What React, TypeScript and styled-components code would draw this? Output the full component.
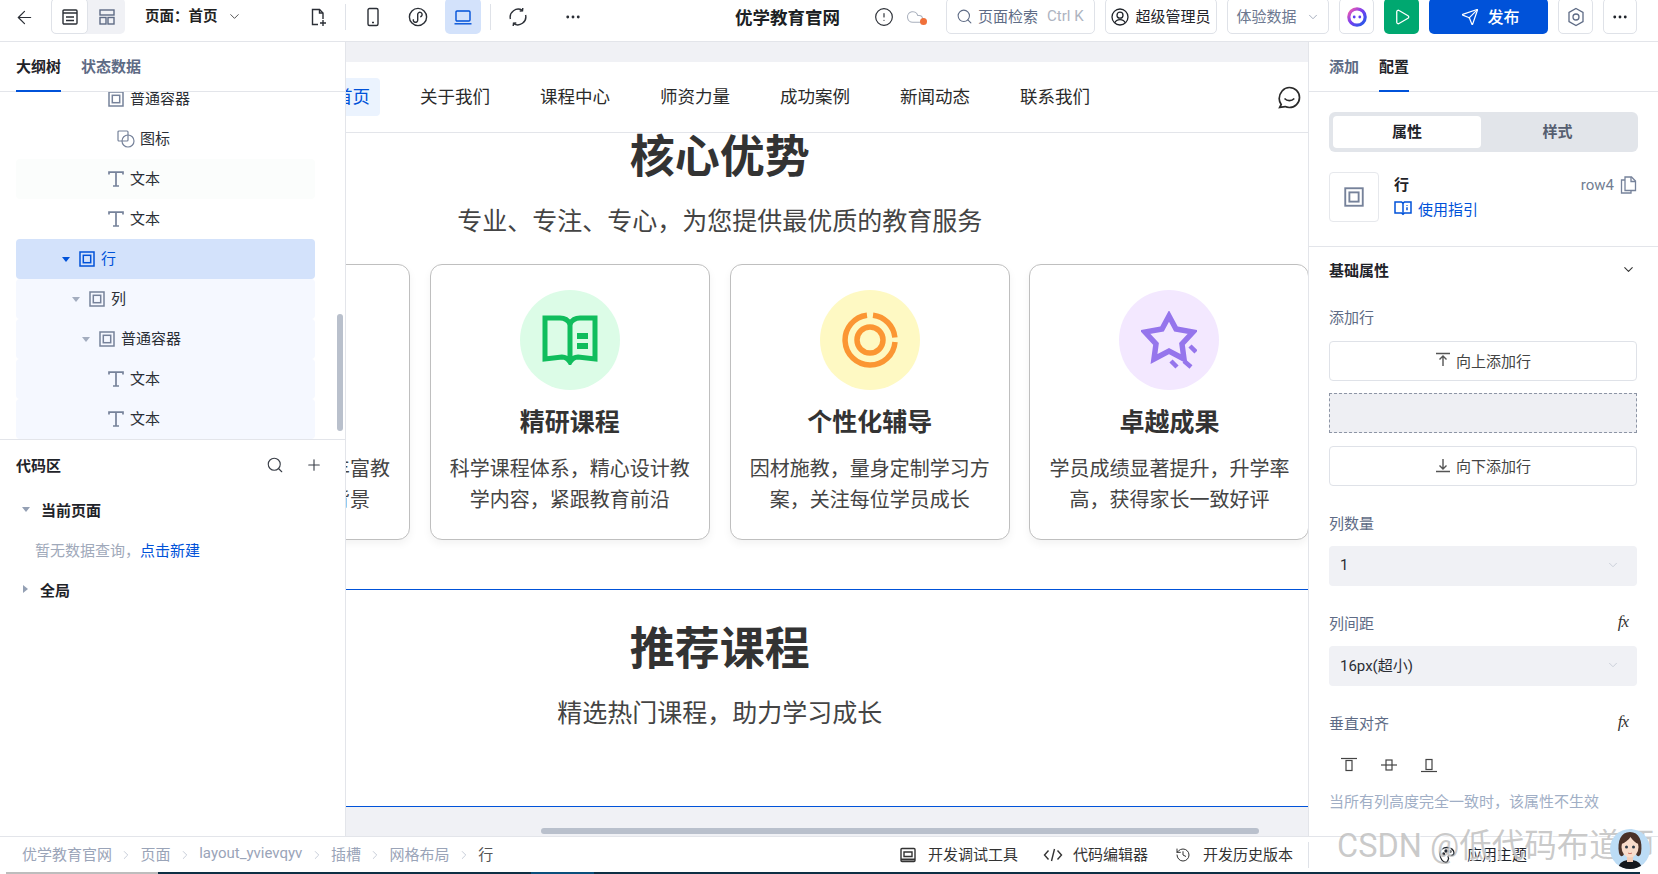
import React from 'react'
import styled, {createGlobalStyle} from 'styled-components'
import {
  ArrowLeft,
  ChevronDown,
  ChevronRight,
  CircleAlert,
  Cloud,
  Ellipsis,
  History,
  Play,
  Plus,
  Search,
  Send,
} from 'lucide-react'

const GlobalStyle = createGlobalStyle`
  html, body {
    margin: 0;
    height: 100%;
    overflow: hidden;
    background: #fff;
  }
  body, button {
    font-family: Roboto, "Noto Sans CJK SC", sans-serif;
    color: #1f2329;
  }
  * {
    box-sizing: border-box;
  }
`

const Root = styled.div`
  position: relative;
  width: 1658px;
  height: 874px;
  display: flex;
  flex-direction: column;
  overflow: hidden;
`

/* top bar */

const TopBar = styled.header`
  flex: none;
  height: 42px;
  display: flex;
  align-items: flex-start;
  padding-left: 16px;
  background: #fff;
  border-bottom: 1px solid #e3e5ea;
`

const BackButton = styled.div`
  width: 16px;
  height: 34px;
  display: flex;
  align-items: center;
  justify-content: center;
  color: #2b2f36;
  svg {
    flex: none;
  }
`

const ViewToggle = styled.div`
  display: flex;
  margin: -2px 0 0 19px;
  height: 36px;
  width: 74px;
  background: #f0f1f5;
  border-radius: 5px;
`

const ToggleItem = styled.div<{$active?: boolean}>`
  width: 37px;
  display: flex;
  align-items: center;
  justify-content: center;
  padding-top: 2px;
  border-radius: 5px;
  background: ${(p) => (p.$active ? '#fff' : 'transparent')};
  border: ${(p) => (p.$active ? '1px solid #dfe2e8' : 'none')};
`

const PageSelect = styled.div`
  width: 155px;
  height: 34px;
  margin: 0 0 0 20px;
  display: flex;
  align-items: center;
  font-size: 14.5px;
  font-weight: 700;
  color: #222;
  padding-bottom: 5px;
  svg {
    margin-left: 9px;
    margin-top: 3px;
    color: #555;
  }
`

const DeviceGroup = styled.div`
  display: flex;
  align-items: center;
  gap: 9px;
  height: 34px;
`

const IconButton = styled.div<{$active?: boolean}>`
  width: 36px;
  height: 36px;
  margin-top: -2px;
  padding-top: 2px;
  display: flex;
  align-items: center;
  justify-content: center;
  border-radius: 5px;
  color: #2b2f36;
  background: ${(p) => (p.$active ? '#d3e2fb' : 'transparent')};
`

const DotsButton = styled(IconButton)`
  margin-left: 10px;
`

const VRule = styled.div`
  width: 1px;
  height: 26px;
  background: #dfe2e8;
`

const Title = styled.div`
  width: 105px;
  margin-left: 144px;
  height: 34px;
  line-height: 36px;
  font-size: 17.5px;
  font-weight: 700;
  white-space: nowrap;
  color: #1c1f24;
`

const StatusIcons = styled.div`
  width: 106px;
  height: 34px;
  display: flex;
  align-items: center;
  padding-left: 34px;
  gap: 12px;
  color: #2b2f36;
`

const CloudWrap = styled.div`
  position: relative;
  display: flex;
  color: #a9b0bd;
`

const CloudDot = styled.span`
  position: absolute;
  right: -3px;
  bottom: 1px;
  width: 7px;
  height: 7px;
  border-radius: 50%;
  background: #f0703a;
`

const RightTools = styled.div`
  display: flex;
  gap: 10px;
`

const SearchBox = styled.div`
  width: 149px;
  height: 36px;
  margin-top: -2px;
  padding: 0 0 1px 9px;
  display: flex;
  align-items: center;
  border: 1px solid #dfe2e8;
  border-radius: 5px;
  font-size: 15px;
  color: #5e6b85;
  svg {
    margin-right: 5px;
    margin-top: 2px;
  }
`

const SearchKey = styled.span`
  margin-left: 9px;
  font-size: 15px;
  color: #aeb4c1;
`

const ToolButton = styled.div<{$w: number; $tone?: string; $muted?: boolean}>`
  width: ${(p) => p.$w}px;
  height: 36px;
  margin-top: -2px;
  padding-bottom: 1px;
  display: flex;
  align-items: center;
  justify-content: center;
  gap: 6px;
  border-radius: 5px;
  border: ${(p) => (p.$tone ? 'none' : '1px solid #dfe2e8')};
  background: ${(p) => p.$tone || '#fff'};
  color: ${(p) => (p.$tone ? '#fff' : p.$muted ? '#6d7890' : '#1f2329')};
  font-size: 15px;
  white-space: nowrap;
  svg {
    margin-top: 2px;
  }
`

const PublishButton = styled(ToolButton)`
  gap: 8px;
  padding-left: 4px;
`

const PublishLabel = styled.span`
  font-size: 16px;
  font-weight: 500;
`

const MutedChevron = styled.span`
  display: flex;
  margin-left: 3px;
  color: #9aa3b5;
`

/* body */

const Body = styled.div`
  flex: 1;
  min-height: 0;
  display: flex;
`

const LeftPanel = styled.aside`
  flex: none;
  width: 346px;
  display: flex;
  flex-direction: column;
  background: #fff;
  border-right: 1px solid #e3e5ea;
`

const Tabs = styled.div`
  flex: none;
  height: 50px;
  display: flex;
  gap: 20px;
  border-bottom: 1px solid #e3e5ea;
`

const LeftTabs = styled(Tabs)`
  padding-left: 16px;
`

const RightTabs = styled(Tabs)`
  padding-left: 20px;
`

const Tab = styled.div<{$active?: boolean}>`
  height: 50px;
  line-height: 51px;
  font-size: 15px;
  font-weight: 700;
  color: ${(p) => (p.$active ? '#1f2329' : '#5e6b85')};
  border-bottom: 2px solid ${(p) => (p.$active ? '#0052d9' : 'transparent')};
`

const TreeArea = styled.div`
  position: relative;
  flex: none;
  height: 348px;
  overflow: hidden;
  border-bottom: 1px solid #e3e5ea;
  padding: 0 30px 0 16px;
`

const TreeScroll = styled.div`
  margin-top: -13px;
`

const TreeRow = styled.div<{$indent: number; $tone?: 'selected' | 'child' | 'hover'}>`
  height: 40px;
  display: flex;
  align-items: center;
  padding-left: ${(p) => p.$indent}px;
  border-radius: 4px;
  font-size: 15px;
  color: ${(p) => (p.$tone === 'selected' ? '#0052d9' : '#2b2f36')};
  background: ${(p) =>
    p.$tone === 'selected'
      ? '#d3e2fb'
      : p.$tone === 'child'
        ? '#f5f8ff'
        : p.$tone === 'hover'
          ? '#fbfdfc'
          : 'transparent'};
`

const TreeArrow = styled.span<{$blue?: boolean}>`
  width: 0;
  height: 0;
  margin-right: 9px;
  border-left: 4px solid transparent;
  border-right: 4px solid transparent;
  border-top: 5.5px solid ${(p) => (p.$blue ? '#0052d9' : '#a3adbf')};
`

const TreeLabel = styled.span`
  margin-left: 6px;
  padding-bottom: 3px;
`

const ShapeLabel = styled(TreeLabel)`
  margin-left: 5px;
`

const TreeScrollbar = styled.div`
  position: absolute;
  left: 337px;
  top: 222px;
  width: 6px;
  height: 117px;
  border-radius: 3px;
  background: #b9c0cc;
`

const CodeHead = styled.div`
  height: 50px;
  display: flex;
  align-items: center;
  padding: 0 22px 0 16px;
  font-size: 15px;
  font-weight: 700;
`

const CodeTitle = styled.span`
  padding-bottom: 2px;
`

const CodeTools = styled.div`
  margin-left: auto;
  display: flex;
  gap: 21px;
  color: #3a3f48;
`

const CodeRow = styled.div`
  height: 40px;
  display: flex;
  align-items: center;
  padding: 0 0 2px 22px;
  font-size: 15px;
  font-weight: 700;
`

const Caret = styled.span<{$open?: boolean}>`
  width: 0;
  height: 0;
  margin-right: 11px;
  border-style: solid;
  border-color: transparent;
  ${(p) =>
    p.$open
      ? 'border-width: 5.5px 4px 0; border-top-color: #94a0b4;'
      : 'border-width: 4px 0 4px 5.5px; border-left-color: #94a0b4; margin-left: 1px; margin-right: 12px;'}
`

const EmptyRow = styled.div`
  height: 40px;
  display: flex;
  align-items: center;
  padding: 0 0 2px 35px;
  font-size: 15px;
  color: #a0a9ba;
`

const BlueLink = styled.span`
  color: #0052d9;
`

/* canvas */

const Canvas = styled.main`
  position: relative;
  flex: 1;
  min-width: 0;
  padding-top: 20px;
  overflow: hidden;
  background: #f0f1f5;
`

const Page = styled.div`
  width: 1179.5px;
  margin-left: -216px;
  background: #fff;
`

const PreviewNav = styled.nav`
  height: 71px;
  display: flex;
  align-items: center;
  gap: 30px;
  padding: 0 9px 0 195px;
  border-bottom: 1px solid #e3e5ea;
`

const NavItem = styled.div<{$active?: boolean}>`
  height: 38px;
  line-height: 38px;
  padding: 0 10px;
  border-radius: 4px;
  font-size: 17.5px;
  white-space: nowrap;
  color: ${(p) => (p.$active ? '#0052d9' : '#2a2a2a')};
  background: ${(p) => (p.$active ? '#ebf3fe' : 'transparent')};
`

const ChatIcon = styled.div`
  margin-left: auto;
  display: flex;
  color: #2a2a2a;
`

const Section = styled.section<{$top: number; $bottom: number}>`
  padding: ${(p) => p.$top}px 0 ${(p) => p.$bottom}px;
  border-bottom: 1px solid #0052d9;
  text-align: center;
`

const SectionTitle = styled.h2`
  margin: 0;
  font-size: 45px;
  line-height: 46px;
  font-weight: 700;
  color: #333;
`

const SectionSub = styled.p`
  margin: 21px 0 0;
  font-size: 25px;
  line-height: 40px;
  color: #444;
`

const CardGrid = styled.div`
  margin-top: 22px;
  display: grid;
  grid-template-columns: repeat(4, 280px);
  justify-content: space-between;
`

const Card = styled.div`
  height: 276px;
  padding: 25px 18px 0;
  border: 1px solid #bfbfbf;
  border-radius: 12px;
  background: #fff;
  box-shadow: 0 4px 8px rgba(0, 0, 0, 0.05);
`

const IconCircle = styled.div<{$bg: string}>`
  width: 100px;
  height: 100px;
  margin: 0 auto;
  display: flex;
  align-items: center;
  justify-content: center;
  border-radius: 50%;
  background: ${(p) => p.$bg};
`

const CardTitle = styled.h3`
  margin: 16px 0 0;
  font-size: 25px;
  line-height: 34px;
  font-weight: 700;
  color: #333;
`

const CardText = styled.p`
  margin: 14px 0 0;
  font-size: 20px;
  line-height: 31px;
  color: #444;
`

const CanvasScrollbar = styled.div`
  position: absolute;
  left: 195px;
  bottom: 2px;
  width: 718px;
  height: 6px;
  border-radius: 3px;
  background: #b9c0cc;
`

/* right panel */

const RightPanel = styled.aside`
  flex: none;
  width: 350px;
  background: #fff;
  border-left: 1px solid #e3e5ea;
`

const Segment = styled.div`
  display: flex;
  height: 40px;
  margin: 20px 20px 0;
  padding: 4px;
  border-radius: 6px;
  background: #e2e5ea;
`

const SegmentItem = styled.div<{$active?: boolean}>`
  flex: ${(p) => (p.$active ? '0 0 148px' : '1')};
  display: flex;
  align-items: center;
  justify-content: center;
  padding-bottom: 3px;
  border-radius: 4px;
  font-size: 15px;
  font-weight: 700;
  color: ${(p) => (p.$active ? '#1f2329' : '#555e70')};
  background: ${(p) => (p.$active ? '#fff' : 'transparent')};
`

const InfoRow = styled.div`
  display: flex;
  gap: 15px;
  padding: 20px 21px 24px 20px;
  border-bottom: 1px solid #e3e5ea;
`

const InfoBox = styled.div`
  width: 50px;
  height: 50px;
  display: flex;
  align-items: center;
  justify-content: center;
  border: 1px solid #e6e8ec;
  border-radius: 4px;
`

const InfoMain = styled.div`
  flex: 1;
`

const InfoName = styled.div`
  height: 24px;
  line-height: 24px;
  padding-top: 1px;
  display: flex;
  justify-content: space-between;
  font-size: 15px;
  font-weight: 700;
`

const InfoId = styled.span`
  display: flex;
  align-items: center;
  gap: 6px;
  font-size: 15px;
  font-weight: 400;
  color: #727d92;
`

const GuideLink = styled.div`
  margin-top: 1px;
  height: 22px;
  display: flex;
  align-items: center;
  gap: 6px;
  font-size: 15px;
  color: #0052d9;
`

const PropsBody = styled.div`
  padding: 0 21px 0 20px;
`

const GroupHead = styled.div`
  height: 44px;
  display: flex;
  align-items: center;
  justify-content: space-between;
  font-size: 15px;
  font-weight: 700;
  svg {
    margin-right: 1px;
    color: #333;
  }
`

const FieldLabel = styled.div<{$top?: number}>`
  height: 22px;
  display: flex;
  align-items: center;
  justify-content: space-between;
  margin-top: ${(p) => p.$top ?? 25}px;
  font-size: 15px;
  color: #5e6b85;
`

const FxMark = styled.span`
  margin-right: 9px;
  font-family: "Liberation Serif", serif;
  font-style: italic;
  font-size: 17px;
  letter-spacing: -1px;
  color: #333;
`

const AddButton = styled.div<{$top: number}>`
  height: 40px;
  margin-top: ${(p) => p.$top}px;
  padding-bottom: 2px;
  display: flex;
  align-items: center;
  justify-content: center;
  gap: 5px;
  border: 1px solid #dfe2e8;
  border-radius: 4px;
  font-size: 15px;
  color: #444;
`

const DashedSlot = styled.div`
  height: 40px;
  margin-top: 12px;
  border: 1px dashed #8d95a5;
  background: #eeeff3;
`

const SelectBox = styled.div`
  height: 40px;
  margin-top: 13px;
  padding: 0 17px 3px 11px;
  display: flex;
  align-items: center;
  justify-content: space-between;
  border-radius: 4px;
  background: #f0f1f5;
  font-size: 15px;
  color: #2b2f36;
  svg {
    color: #c5cad5;
  }
`

const AlignRow = styled.div`
  display: flex;
  gap: 24px;
  margin-top: 24px;
  padding-left: 12px;
`

const Hint = styled.div`
  margin-top: 18px;
  height: 22px;
  line-height: 22px;
  font-size: 15px;
  white-space: nowrap;
  color: #a0aec5;
`

/* bottom bar */

const BottomBar = styled.footer`
  position: relative;
  flex: none;
  height: 36px;
  display: flex;
  align-items: center;
  padding-left: 22px;
  background: #fff;
  border-top: 1px solid #e3e5ea;
  font-size: 15px;
`

const Crumbs = styled.div`
  display: flex;
  align-items: center;
  gap: 7.3px;
  padding-bottom: 3px;
  color: #9aa4b8;
  svg {
    color: #bcc3d0;
    margin-top: 3px;
  }
`

const CrumbCurrent = styled.span`
  color: #555;
`

const DevTools = styled.div`
  margin-left: auto;
  display: flex;
  gap: 27px;
  padding-right: 15px;
  color: #333;
`

const DevTool = styled.div`
  display: flex;
  align-items: center;
  gap: 12px;
  padding-bottom: 3px;
  svg {
    margin-top: 3px;
  }
`

const CodeTool = styled(DevTool)`
  gap: 10px;
  svg {
    margin-left: -2px;
  }
`

const ThemeArea = styled.div`
  flex: none;
  width: 350px;
  height: 26px;
  padding: 0 0 3px 130px;
  display: flex;
  align-items: center;
  gap: 12px;
  border-left: 1px solid #dfe2e8;
  color: #1f2329;
  svg {
    margin-top: 3px;
  }
`

const AvatarBadge = styled.div`
  position: absolute;
  right: 8px;
  top: -8px;
  width: 40px;
  height: 40px;
  border-radius: 50%;
  overflow: hidden;
  background: #bcdcf5;
`

const Watermark = styled.div`
  position: absolute;
  left: 1337px;
  top: -11px;
  font-size: 32.5px;
  line-height: 40px;
  white-space: nowrap;
  color: rgba(150, 150, 150, 0.5);
  text-shadow: 1px 1px 1px rgba(255, 255, 255, 0.9);
  pointer-events: none;
`

const BottomStrip = styled.div`
  flex: none;
  height: 2px;
  background: linear-gradient(
    to right,
    #fff 0 6px,
    #bdbdbd 6px 158px,
    #0d2f44 158px 531px,
    #0a4f7c 531px 594px,
    #0d2f44 594px 1640px,
    #fff 1640px
  );
`

/* drawn icons */

const OutlineIcon = () => (
  <svg width="18" height="18" viewBox="0 0 18 18" fill="none" stroke="#2b2f36" strokeWidth="1.4">
    <rect x="2" y="2" width="14" height="14" rx="1" />
    <path d="M2 5h14M5 9h8M5 12.5h8" />
  </svg>
)

const LayoutIcon = () => (
  <svg width="18" height="18" viewBox="0 0 18 18" fill="none" stroke="#5e6b85" strokeWidth="1.4">
    <rect x="2" y="2" width="14" height="5" />
    <rect x="2" y="9.5" width="6" height="6.5" />
    <rect x="10" y="9.5" width="6" height="6.5" />
  </svg>
)

const NewPageIcon = () => (
  <svg width="20" height="20" viewBox="0 0 20 20" fill="none" stroke="#2b2f36" strokeWidth="1.4">
    <path d="M10 17.5H4.5V2.5h7l3.5 3.5v6" />
    <path d="M11.5 2.5V6H15" />
    <path d="M12 16h6M15 13v6" />
  </svg>
)

const PhoneIcon = () => (
  <svg width="18" height="20" viewBox="0 0 18 20" fill="none" stroke="#2b2f36" strokeWidth="1.4">
    <rect x="4" y="1.5" width="10" height="17" rx="1.5" />
    <path d="M8 15.5h2" />
  </svg>
)

const MiniIcon = () => (
  <svg width="20" height="20" viewBox="0 0 20 20" fill="none" stroke="#2b2f36" strokeWidth="1.4">
    <circle cx="10" cy="10" r="8.6" />
    <path d="M5.5 12.2a2.2 2.2 0 1 0 4.2 1V7.4a2.2 2.2 0 1 1 4.2 1c-.3.8-1 1.2-1.7 1.3" />
  </svg>
)

const LaptopIcon = () => (
  <svg width="20" height="20" viewBox="0 0 20 20" fill="none" stroke="#0052d9" strokeWidth="1.4">
    <rect x="3" y="4" width="14" height="10" rx="1" />
    <path d="M1.5 16.8h17" />
  </svg>
)

const RefreshIcon = () => (
  <svg width="20" height="20" viewBox="0 0 20 20" fill="none" stroke="#2b2f36" strokeWidth="1.4">
    <path d="M2.4 12a8 8 0 0 1 12-8.6" />
    <path d="M17.6 8a8 8 0 0 1-12 8.6" />
    <path d="M14.8 1l-.3 2.8-2.8.2M5.2 19l.3-2.8 2.8-.2" />
  </svg>
)

const UserIcon = () => (
  <svg width="18" height="18" viewBox="0 0 18 18" fill="none" stroke="#1f2329" strokeWidth="1.3">
    <circle cx="9" cy="9" r="8" />
    <circle cx="9" cy="7.2" r="3" />
    <path d="M3.6 15c1-2.4 3-3.4 5.4-3.4s4.4 1 5.4 3.4" />
  </svg>
)

const AiIcon = () => (
  <svg width="22" height="22" viewBox="0 0 22 22" fill="none">
    <defs>
      <linearGradient id="aiRing" x1="0" y1="0" x2="1" y2="1">
        <stop offset="0" stopColor="#ff5fa8" />
        <stop offset="0.45" stopColor="#7a3ff0" />
        <stop offset="1" stopColor="#1c5be8" />
      </linearGradient>
    </defs>
    <circle cx="11" cy="11" r="8.2" stroke="url(#aiRing)" strokeWidth="3.2" />
    <circle cx="8.2" cy="11" r="1.4" fill="#5b3ff0" />
    <circle cx="13.8" cy="11" r="1.4" fill="#5b3ff0" />
  </svg>
)

const HexIcon = () => (
  <svg width="18" height="20" viewBox="0 0 18 20" fill="none" stroke="#5e6b85" strokeWidth="1.3">
    <path d="M9 1.5l7 4v9l-7 4-7-4v-9z" />
    <circle cx="9" cy="10" r="3" />
  </svg>
)

const TextIcon = () => (
  <svg width="16" height="16" viewBox="0 0 16 16" fill="none" stroke="#76829a" strokeWidth="1.7">
    <path d="M1 3.5V1.200h14v2.300M8 1.200V15M5 15h6" />
  </svg>
)

const BoxIcon = ({color = '#76829a', size = 16}: {color?: string; size?: number}) => (
  <svg width={size} height={size} viewBox="0 0 16 16" fill="none" stroke={color} strokeWidth="1.5">
    <rect x="1" y="1" width="14" height="14" />
    <rect x="4.3" y="4.3" width="7.4" height="7.4" />
  </svg>
)

const ShapeIcon = () => (
  <svg width="18" height="18" viewBox="0 0 18 18" fill="none" stroke="#76829a" strokeWidth="1.2">
    <rect x="1" y="1" width="10" height="10" rx="1" />
    <circle cx="11" cy="11" r="6" />
  </svg>
)

const ChatGlyph = () => (
  <svg width="24" height="24" viewBox="0 0 24 24" fill="none" stroke="currentColor" strokeWidth="1.7">
    <path d="M4.200 19.500c-1.300-1.700-2-3.700-2-5.900C2.200 8 6.600 2.500 12.300 2.500S22.500 7 22.500 12.500 17.900 22.500 12.300 22.500c-1.500 0-3-.3-4.300-.9l-5.300.8z" />
    <path d="M7.500 13.500c2.800 2.800 7 2.800 9.800 0" />
  </svg>
)

const BookGlyph = () => (
  <svg width="56" height="50" viewBox="0 0 56 50" fill="none" stroke="#10bd5d" strokeWidth="5">
    <path d="M3 3h15q7 0 10 6q3-6 10-6h15v41l-17-2q-5 0-8 5q-3-5-8-5L3 44z" />
    <path d="M28 9v36" />
    <path d="M35 21h11M35 31h11" strokeWidth="6" />
  </svg>
)

const TargetGlyph = () => (
  <svg width="56" height="56" viewBox="0 0 56 56" fill="none" stroke="#fb9633" strokeWidth="5.5">
    <circle cx="28" cy="28" r="13" />
    <path d="M31 3.200A25 25 0 0 1 52.900 25.500" />
    <path d="M53 30A25 25 0 1 1 25 3.200" />
  </svg>
)

const StarGlyph = () => (
  <svg width="56" height="58" viewBox="0 0 56 58" fill="none" stroke="#9575ec" strokeWidth="5.5">
    <path d="M28 5l7 13 17 3-11 12 2 15-15-8-15 8 2-15L4 21l17-3z" />
    <path d="M49 35l6 6M30 50l6 6M43 50l7 6" strokeWidth="4.5" />
  </svg>
)

const GuideIcon = () => (
  <svg width="18" height="18" viewBox="0 0 18 18" fill="none" stroke="#0052d9" strokeWidth="1.5">
    <path d="M1 3h6.500L9 4.200 10.500 3H17v11h-6.500L9 15.200 7.500 14H1z" />
    <path d="M9 4.200v11" />
    <path d="M13 6v.8M13 8.300v3" />
  </svg>
)

const CopyIcon = () => (
  <svg width="17" height="18" viewBox="0 0 17 18" fill="none" stroke="#76829a" strokeWidth="1.3">
    <path d="M5 1h6.500L15.500 5v9.500H5z" />
    <path d="M11 1v4.500h4.500" />
    <path d="M5 4H1.500v13H11v-2.500" />
  </svg>
)

const ArrowBarIcon = ({down}: {down?: boolean}) => (
  <svg width="16" height="16" viewBox="0 0 16 16" fill="none" stroke="#555" strokeWidth="1.4">
    {down ? (
      <path d="M1 14.500h14M8 2v10M4.500 8.500L8 12l3.500-3.500" />
    ) : (
      <path d="M1 1.500h14M8 14V4M4.500 7.500L8 4l3.500 3.500" />
    )}
  </svg>
)

const AlignIcon = ({mode}: {mode: 'top' | 'mid' | 'end'}) => {
  const lineY = mode === 'top' ? 1.5 : mode === 'mid' ? 8 : 14.5
  const rectY = mode === 'top' ? 3.5 : mode === 'mid' ? 3 : 2.5
  return (
    <svg width="16" height="16" viewBox="0 0 16 16" fill="none" stroke="#444" strokeWidth="1.2">
      <path d={`M0 ${lineY}h16`} />
      <rect x="5" y={rectY} width="6" height="10" />
    </svg>
  )
}

const ConsoleIcon = () => (
  <svg width="16" height="16" viewBox="0 0 16 16" fill="none" stroke="#333" strokeWidth="1.4">
    <rect x="1" y="1.500" width="14" height="13" rx="1" />
    <path d="M4 5h8v4.500H4z" />
    <path d="M1 12.500h14" strokeWidth="2" />
  </svg>
)

const CodeGlyph = () => (
  <svg width="20" height="16" viewBox="0 0 20 16" fill="none" stroke="#333" strokeWidth="1.4">
    <path d="M5.500 3.500L1.500 8l4 4.500M14.500 3.500l4 4.500-4 4.500M11.500 2l-3 12" />
  </svg>
)

const PaletteIcon = () => (
  <svg width="16" height="18" viewBox="0 0 16 18" fill="none" stroke="#1f2329" strokeWidth="1.3">
    <path d="M1 8c0-4 3-6.500 7-6.500S15 4 15 7c0 1.500-1 2.300-2.500 2.300H10c-1 0-1.300 1-.8 1.700.6 1 .5 2-.1 3-.5.800-1 2.500-2.100 2.500C3.500 16.500 1 12 1 8z" />
    <circle cx="4.500" cy="8" r="1" fill="#1f2329" />
    <circle cx="7" cy="5" r="1" fill="#1f2329" />
    <circle cx="11" cy="5.500" r="1" fill="#1f2329" />
  </svg>
)

const AvatarArt = () => (
  <svg width="40" height="40" viewBox="0 0 40 40">
    <path d="M8 40c1-7 6-9 12-9s11 2 12 9z" fill="#15181d" />
    <rect x="17" y="25" width="6" height="8" fill="#f3cdb8" />
    <path d="M9 24C7 12 11 3 20 3s13 9 11 21c-1 4-4 4-5 1H14c-1 3-4 3-5-1z" fill="#4a3128" />
    <ellipse cx="20" cy="18" rx="8.500" ry="10.500" fill="#f8dccb" />
    <path d="M11.500 15c3-1 7-4 9-7 2 3 5 6 8 7 0-6-3-9-8.500-9S11 9 11.500 15z" fill="#4a3128" />
    <circle cx="16.500" cy="18" r="1.500" fill="#2d3a48" />
    <circle cx="23.500" cy="18" r="1.500" fill="#2d3a48" />
    <path d="M18 24c1.300.8 2.700.8 4 0" stroke="#c46a5e" strokeWidth="0.9" fill="none" />
  </svg>
)

/* data */

const navItems = ['首页', '关于我们', '课程中心', '师资力量', '成功案例', '新闻动态', '联系我们']

const cards = [
  {
    title: '名师团队',
    text: '资深教师团队，经验丰富教学，拥有名校教育背景',
    bg: '#dbeafe',
    icon: <StarGlyph />,
  },
  {
    title: '精研课程',
    text: '科学课程体系，精心设计教学内容，紧跟教育前沿',
    bg: '#dcfce7',
    icon: <BookGlyph />,
  },
  {
    title: '个性化辅导',
    text: '因材施教，量身定制学习方案，关注每位学员成长',
    bg: '#fef9c3',
    icon: <TargetGlyph />,
  },
  {
    title: '卓越成果',
    text: '学员成绩显著提升，升学率高，获得家长一致好评',
    bg: '#f3e8ff',
    icon: <StarGlyph />,
  },
]

const crumbs = ['优学教育官网', '页面', 'layout_yvievqyv', '插槽', '网格布局']

export default function App() {
  return (
    <Root>
      <GlobalStyle />
      <TopBar>
        <BackButton>
          <ArrowLeft size={21} strokeWidth={1.4} />
        </BackButton>
        <ViewToggle>
          <ToggleItem $active>
            <OutlineIcon />
          </ToggleItem>
          <ToggleItem>
            <LayoutIcon />
          </ToggleItem>
        </ViewToggle>
        <PageSelect>
          页面：首页
          <ChevronDown size={15} strokeWidth={1.6} />
        </PageSelect>
        <DeviceGroup>
          <IconButton>
            <NewPageIcon />
          </IconButton>
          <VRule />
          <IconButton>
            <PhoneIcon />
          </IconButton>
          <IconButton>
            <MiniIcon />
          </IconButton>
          <IconButton $active>
            <LaptopIcon />
          </IconButton>
          <VRule />
          <IconButton>
            <RefreshIcon />
          </IconButton>
          <DotsButton>
            <Ellipsis size={18} strokeWidth={1.8} />
          </DotsButton>
        </DeviceGroup>
        <Title>优学教育官网</Title>
        <StatusIcons>
          <CircleAlert size={20} strokeWidth={1.4} />
          <CloudWrap>
            <Cloud size={18} strokeWidth={1.4} />
            <CloudDot />
          </CloudWrap>
        </StatusIcons>
        <RightTools>
          <SearchBox>
            <Search size={17} strokeWidth={1.5} />
            页面检索
            <SearchKey>Ctrl K</SearchKey>
          </SearchBox>
          <ToolButton $w={112}>
            <UserIcon />
            超级管理员
          </ToolButton>
          <ToolButton $w={102} $muted>
            体验数据
            <MutedChevron>
              <ChevronDown size={14} strokeWidth={1.5} />
            </MutedChevron>
          </ToolButton>
          <ToolButton $w={35}>
            <AiIcon />
          </ToolButton>
          <ToolButton $w={35} $tone="#00a870">
            <Play size={18} strokeWidth={1.7} />
          </ToolButton>
          <PublishButton $w={119} $tone="#0052d9">
            <Send size={18} strokeWidth={1.6} />
            <PublishLabel>发布</PublishLabel>
          </PublishButton>
          <ToolButton $w={35}>
            <HexIcon />
          </ToolButton>
          <ToolButton $w={34}>
            <Ellipsis size={18} strokeWidth={1.8} />
          </ToolButton>
        </RightTools>
      </TopBar>

      <Body>
        <LeftPanel>
          <LeftTabs>
            <Tab $active>大纲树</Tab>
            <Tab>状态数据</Tab>
          </LeftTabs>
          <TreeArea>
            <TreeScroll>
              <TreeRow $indent={92}>
                <BoxIcon />
                <TreeLabel>普通容器</TreeLabel>
              </TreeRow>
              <TreeRow $indent={101}>
                <ShapeIcon />
                <ShapeLabel>图标</ShapeLabel>
              </TreeRow>
              <TreeRow $indent={92} $tone="hover">
                <TextIcon />
                <TreeLabel>文本</TreeLabel>
              </TreeRow>
              <TreeRow $indent={92}>
                <TextIcon />
                <TreeLabel>文本</TreeLabel>
              </TreeRow>
              <TreeRow $indent={46} $tone="selected">
                <TreeArrow $blue />
                <BoxIcon color="#0052d9" />
                <TreeLabel>行</TreeLabel>
              </TreeRow>
              <TreeRow $indent={56} $tone="child">
                <TreeArrow />
                <BoxIcon />
                <TreeLabel>列</TreeLabel>
              </TreeRow>
              <TreeRow $indent={66} $tone="child">
                <TreeArrow />
                <BoxIcon />
                <TreeLabel>普通容器</TreeLabel>
              </TreeRow>
              <TreeRow $indent={92} $tone="child">
                <TextIcon />
                <TreeLabel>文本</TreeLabel>
              </TreeRow>
              <TreeRow $indent={92} $tone="child">
                <TextIcon />
                <TreeLabel>文本</TreeLabel>
              </TreeRow>
            </TreeScroll>
            <TreeScrollbar />
          </TreeArea>
          <CodeHead>
            <CodeTitle>代码区</CodeTitle>
            <CodeTools>
              <Search size={18} strokeWidth={1.5} />
              <Plus size={18} strokeWidth={1.5} />
            </CodeTools>
          </CodeHead>
          <CodeRow>
            <Caret $open />
            当前页面
          </CodeRow>
          <EmptyRow>
            暂无数据查询，<BlueLink>点击新建</BlueLink>
          </EmptyRow>
          <CodeRow>
            <Caret />
            全局
          </CodeRow>
        </LeftPanel>

        <Canvas>
          <Page>
            <PreviewNav>
              {navItems.map((item, i) => (
                <NavItem key={item} $active={i === 0}>
                  {item}
                </NavItem>
              ))}
              <ChatIcon>
                <ChatGlyph />
              </ChatIcon>
            </PreviewNav>
            <Section $top={2} $bottom={49}>
              <SectionTitle>核心优势</SectionTitle>
              <SectionSub>专业、专注、专心，为您提供最优质的教育服务</SectionSub>
              <CardGrid>
                {cards.map((card) => (
                  <Card key={card.title}>
                    <IconCircle $bg={card.bg}>{card.icon}</IconCircle>
                    <CardTitle>{card.title}</CardTitle>
                    <CardText>{card.text}</CardText>
                  </Card>
                ))}
              </CardGrid>
            </Section>
            <Section $top={37} $bottom={72}>
              <SectionTitle>推荐课程</SectionTitle>
              <SectionSub>精选热门课程，助力学习成长</SectionSub>
            </Section>
          </Page>
          <CanvasScrollbar />
        </Canvas>

        <RightPanel>
          <RightTabs>
            <Tab>添加</Tab>
            <Tab $active>配置</Tab>
          </RightTabs>
          <Segment>
            <SegmentItem $active>属性</SegmentItem>
            <SegmentItem>样式</SegmentItem>
          </Segment>
          <InfoRow>
            <InfoBox>
              <BoxIcon size={20} />
            </InfoBox>
            <InfoMain>
              <InfoName>
                行
                <InfoId>
                  row4
                  <CopyIcon />
                </InfoId>
              </InfoName>
              <GuideLink>
                <GuideIcon />
                使用指引
              </GuideLink>
            </InfoMain>
          </InfoRow>
          <PropsBody>
            <GroupHead>
              基础属性
              <ChevronDown size={15} strokeWidth={1.7} />
            </GroupHead>
            <FieldLabel $top={14}>添加行</FieldLabel>
            <AddButton $top={14}>
              <ArrowBarIcon />
              向上添加行
            </AddButton>
            <DashedSlot />
            <AddButton $top={13}>
              <ArrowBarIcon down />
              向下添加行
            </AddButton>
            <FieldLabel>列数量</FieldLabel>
            <SelectBox>
              1
              <ChevronDown size={14} strokeWidth={1.5} />
            </SelectBox>
            <FieldLabel>
              列间距
              <FxMark>fx</FxMark>
            </FieldLabel>
            <SelectBox>
              16px(超小)
              <ChevronDown size={14} strokeWidth={1.5} />
            </SelectBox>
            <FieldLabel $top={25}>
              垂直对齐
              <FxMark>fx</FxMark>
            </FieldLabel>
            <AlignRow>
              <AlignIcon mode="top" />
              <AlignIcon mode="mid" />
              <AlignIcon mode="end" />
            </AlignRow>
            <Hint>当所有列高度完全一致时，该属性不生效</Hint>
          </PropsBody>
        </RightPanel>
      </Body>

      <BottomBar>
        <Crumbs>
          {crumbs.map((crumb) => (
            <React.Fragment key={crumb}>
              <span>{crumb}</span>
              <ChevronRight size={14} strokeWidth={1.4} />
            </React.Fragment>
          ))}
          <CrumbCurrent>行</CrumbCurrent>
        </Crumbs>
        <DevTools>
          <DevTool>
            <ConsoleIcon />
            开发调试工具
          </DevTool>
          <CodeTool>
            <CodeGlyph />
            代码编辑器
          </CodeTool>
          <DevTool>
            <History size={16} strokeWidth={1.5} />
            开发历史版本
          </DevTool>
        </DevTools>
        <ThemeArea>
          <PaletteIcon />
          应用主题
        </ThemeArea>
        <Watermark>CSDN @低代码布道师</Watermark>
        <AvatarBadge>
          <AvatarArt />
        </AvatarBadge>
      </BottomBar>
      <BottomStrip />
    </Root>
  )
}
